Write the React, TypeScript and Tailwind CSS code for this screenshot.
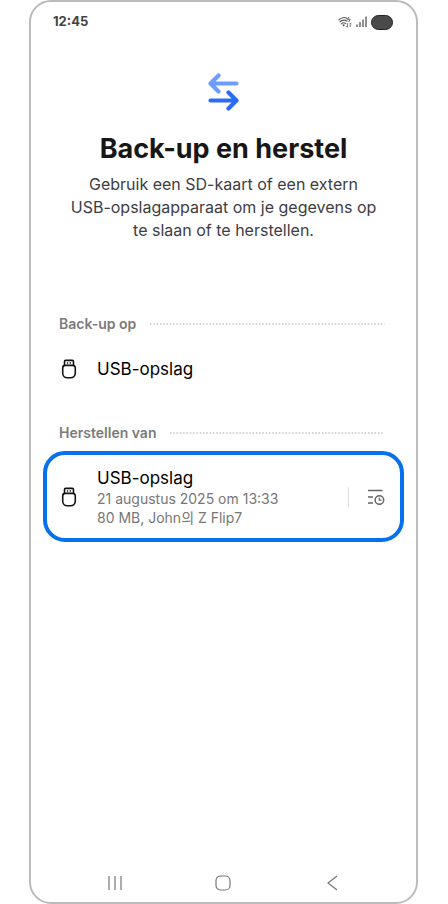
import React from "react";

function UsbIcon() {
  return (
    <svg width="20" height="20" viewBox="0 0 20 20" fill="none" stroke="#111" strokeWidth="1.6" className="shrink-0" aria-hidden="true">
      <path d="M5.500 6.400V2.400a1 1 0 0 1 1-1h7a1 1 0 0 1 1 1v4" />
      <path d="M6.200 6.400h7.600a2.500 2.500 0 0 1 2.500 2.500v5.400a4.500 4.500 0 0 1-4.500 4.500H8.200a4.500 4.500 0 0 1-4.500-4.500V8.900a2.500 2.500 0 0 1 2.500-2.500z" />
      <path d="M8.600 3.200v1.600M11.400 3.200v1.600" strokeWidth="1.300" />
    </svg>
  );
}

function SectionLabel({ children }: { children: React.ReactNode }) {
  return (
    <div className="flex h-5 items-center gap-[14px] pl-7 pr-[31px]">
      <h2 className="text-[14px] leading-5 font-semibold text-[#7b7b7b]">{children}</h2>
      <svg className="h-0.5 min-w-0 flex-1" aria-hidden="true">
        <line x1="0" y1="1" x2="100%" y2="1" stroke="#c4c4c4" strokeWidth="1.300" strokeDasharray="1.500 1.800" />
      </svg>
    </div>
  );
}

function StatusBar() {
  return (
    <div className="flex h-10 items-center justify-between pl-[22px] pr-[23px]">
      <span className="text-[13px] font-bold text-[#444]">12:45</span>
      <div className="flex items-center gap-1">
        <svg width="14" height="12" viewBox="0 0 14 12" fill="none" stroke="#555" strokeWidth="1.100" aria-hidden="true">
          <path d="M0.600 4Q5.500-.2 9.400 2.800M1.600 6Q5.500 2.600 9.400 5.400M3.200 8Q5.600 5.600 8 7.800" />
          <path d="M5.600 8.400v1.800" strokeWidth="1.800" />
          <path d="M11 .8L9.400 3.400h2.800L10.600 6" strokeWidth=".9" />
          <path d="M9.400 7.200v4M8.300 10l1.100 1.200M12.200 11v-4M12.200 7l1.100 1.200" strokeWidth=".8" />
        </svg>
        <svg width="11" height="12" viewBox="0 0 11 12" stroke="#555" strokeWidth="1.300" aria-hidden="true">
          <path d="M1 8.500V11M4 6V11M7 3.500V11M10 .5V11" />
        </svg>
        <span className="h-[15px] w-[22px] rounded-full border border-[#222] bg-[#4a4a4a]" />
      </div>
    </div>
  );
}

export default function App() {
  return (
    <div className="min-h-screen bg-white pl-[29px] pr-[30px] font-['Inter','Noto_Sans_CJK_KR',sans-serif]">
      <main className="flex min-h-screen flex-col rounded-[22px] border-2 border-[#bbb] bg-white">
        <StatusBar />

        <header className="flex flex-col items-center pt-[31px] text-center">
          <svg width="32" height="38" viewBox="0 0 32 38" fill="none" strokeWidth="4.200" strokeLinecap="round" strokeLinejoin="round" aria-hidden="true">
            <path d="M28.500 10.500H3.500M10.500 2.500L2.500 10.500L10.500 18.500" stroke="#6c9cff" />
            <path d="M2.500 27.500H28M20.500 19.500L28.500 27.500L20.500 35.500" stroke="#2b6cf6" />
          </svg>
          <h1 className="mt-5 text-[27px] leading-9 font-bold text-[#171717]">Back-up en herstel</h1>
          <p className="mt-1.5 text-[16px] leading-[23px] text-[#3d3d42]">
            Gebruik een SD-kaart of een extern
            <br />
            USB-opslagapparaat om je gegevens op
            <br />
            te slaan of te herstellen.
          </p>
        </header>

        <section className="mt-[72px]">
          <SectionLabel>Back-up op</SectionLabel>
          <button className="mt-3 flex h-[46px] w-full items-center gap-[18px] pl-7 text-left">
            <UsbIcon />
            <span className="text-[17px] leading-[22px] text-black">USB-opslag</span>
          </button>
        </section>

        <section className="mt-[31px]">
          <SectionLabel>Herstellen van</SectionLabel>
          <div className="mx-3 mt-2 flex items-center rounded-[22px] border-4 border-[#0571ee] pt-3 pr-[15px] pb-[11px] pl-3">
            <button className="flex min-w-0 flex-1 items-center gap-[18px] text-left">
              <UsbIcon />
              <span className="flex flex-col">
                <span className="text-[17px] leading-[22px] text-black">USB-opslag</span>
                <span className="text-[14px] leading-[19px] text-[#777]">21 augustus 2025 om 13:33</span>
                <span className="text-[14px] leading-[19px] text-[#777]">80 MB, John의 Z Flip7</span>
              </span>
            </button>
            <button aria-label="Back-upgeschiedenis" className="flex h-5 items-center border-l border-[#ddd] pl-[18px]">
              <svg width="18" height="16" viewBox="0 0 18 16" fill="none" stroke="#666" strokeWidth="1.500" aria-hidden="true">
                <path d="M1 1.500h14.500M1 8h5M1 14h5" />
                <circle cx="12.400" cy="11" r="4.300" />
                <path d="M12.300 8.500v2.700h2.300" strokeWidth="1.200" />
              </svg>
            </button>
          </div>
        </section>

        <nav className="mt-auto grid h-[38px] grid-cols-3 px-[30px]">
          <button aria-label="Recent" className="flex items-center justify-center">
            <svg width="16" height="16" viewBox="0 0 16 16" stroke="#777" strokeWidth="1.200" aria-hidden="true">
              <path d="M2 1v14M8 1v14M14 1v14" />
            </svg>
          </button>
          <button aria-label="Home" className="flex items-center justify-center">
            <svg width="16" height="16" viewBox="0 0 16 16" fill="none" stroke="#777" strokeWidth="1.200" aria-hidden="true">
              <rect x="1" y="1" width="14" height="14" rx="4.500" />
            </svg>
          </button>
          <button aria-label="Terug" className="flex items-center justify-center">
            <svg width="16" height="16" viewBox="0 0 16 16" fill="none" stroke="#777" strokeWidth="1.200" aria-hidden="true">
              <path d="M13 1L4 8l9 7" />
            </svg>
          </button>
        </nav>
      </main>
    </div>
  );
}
